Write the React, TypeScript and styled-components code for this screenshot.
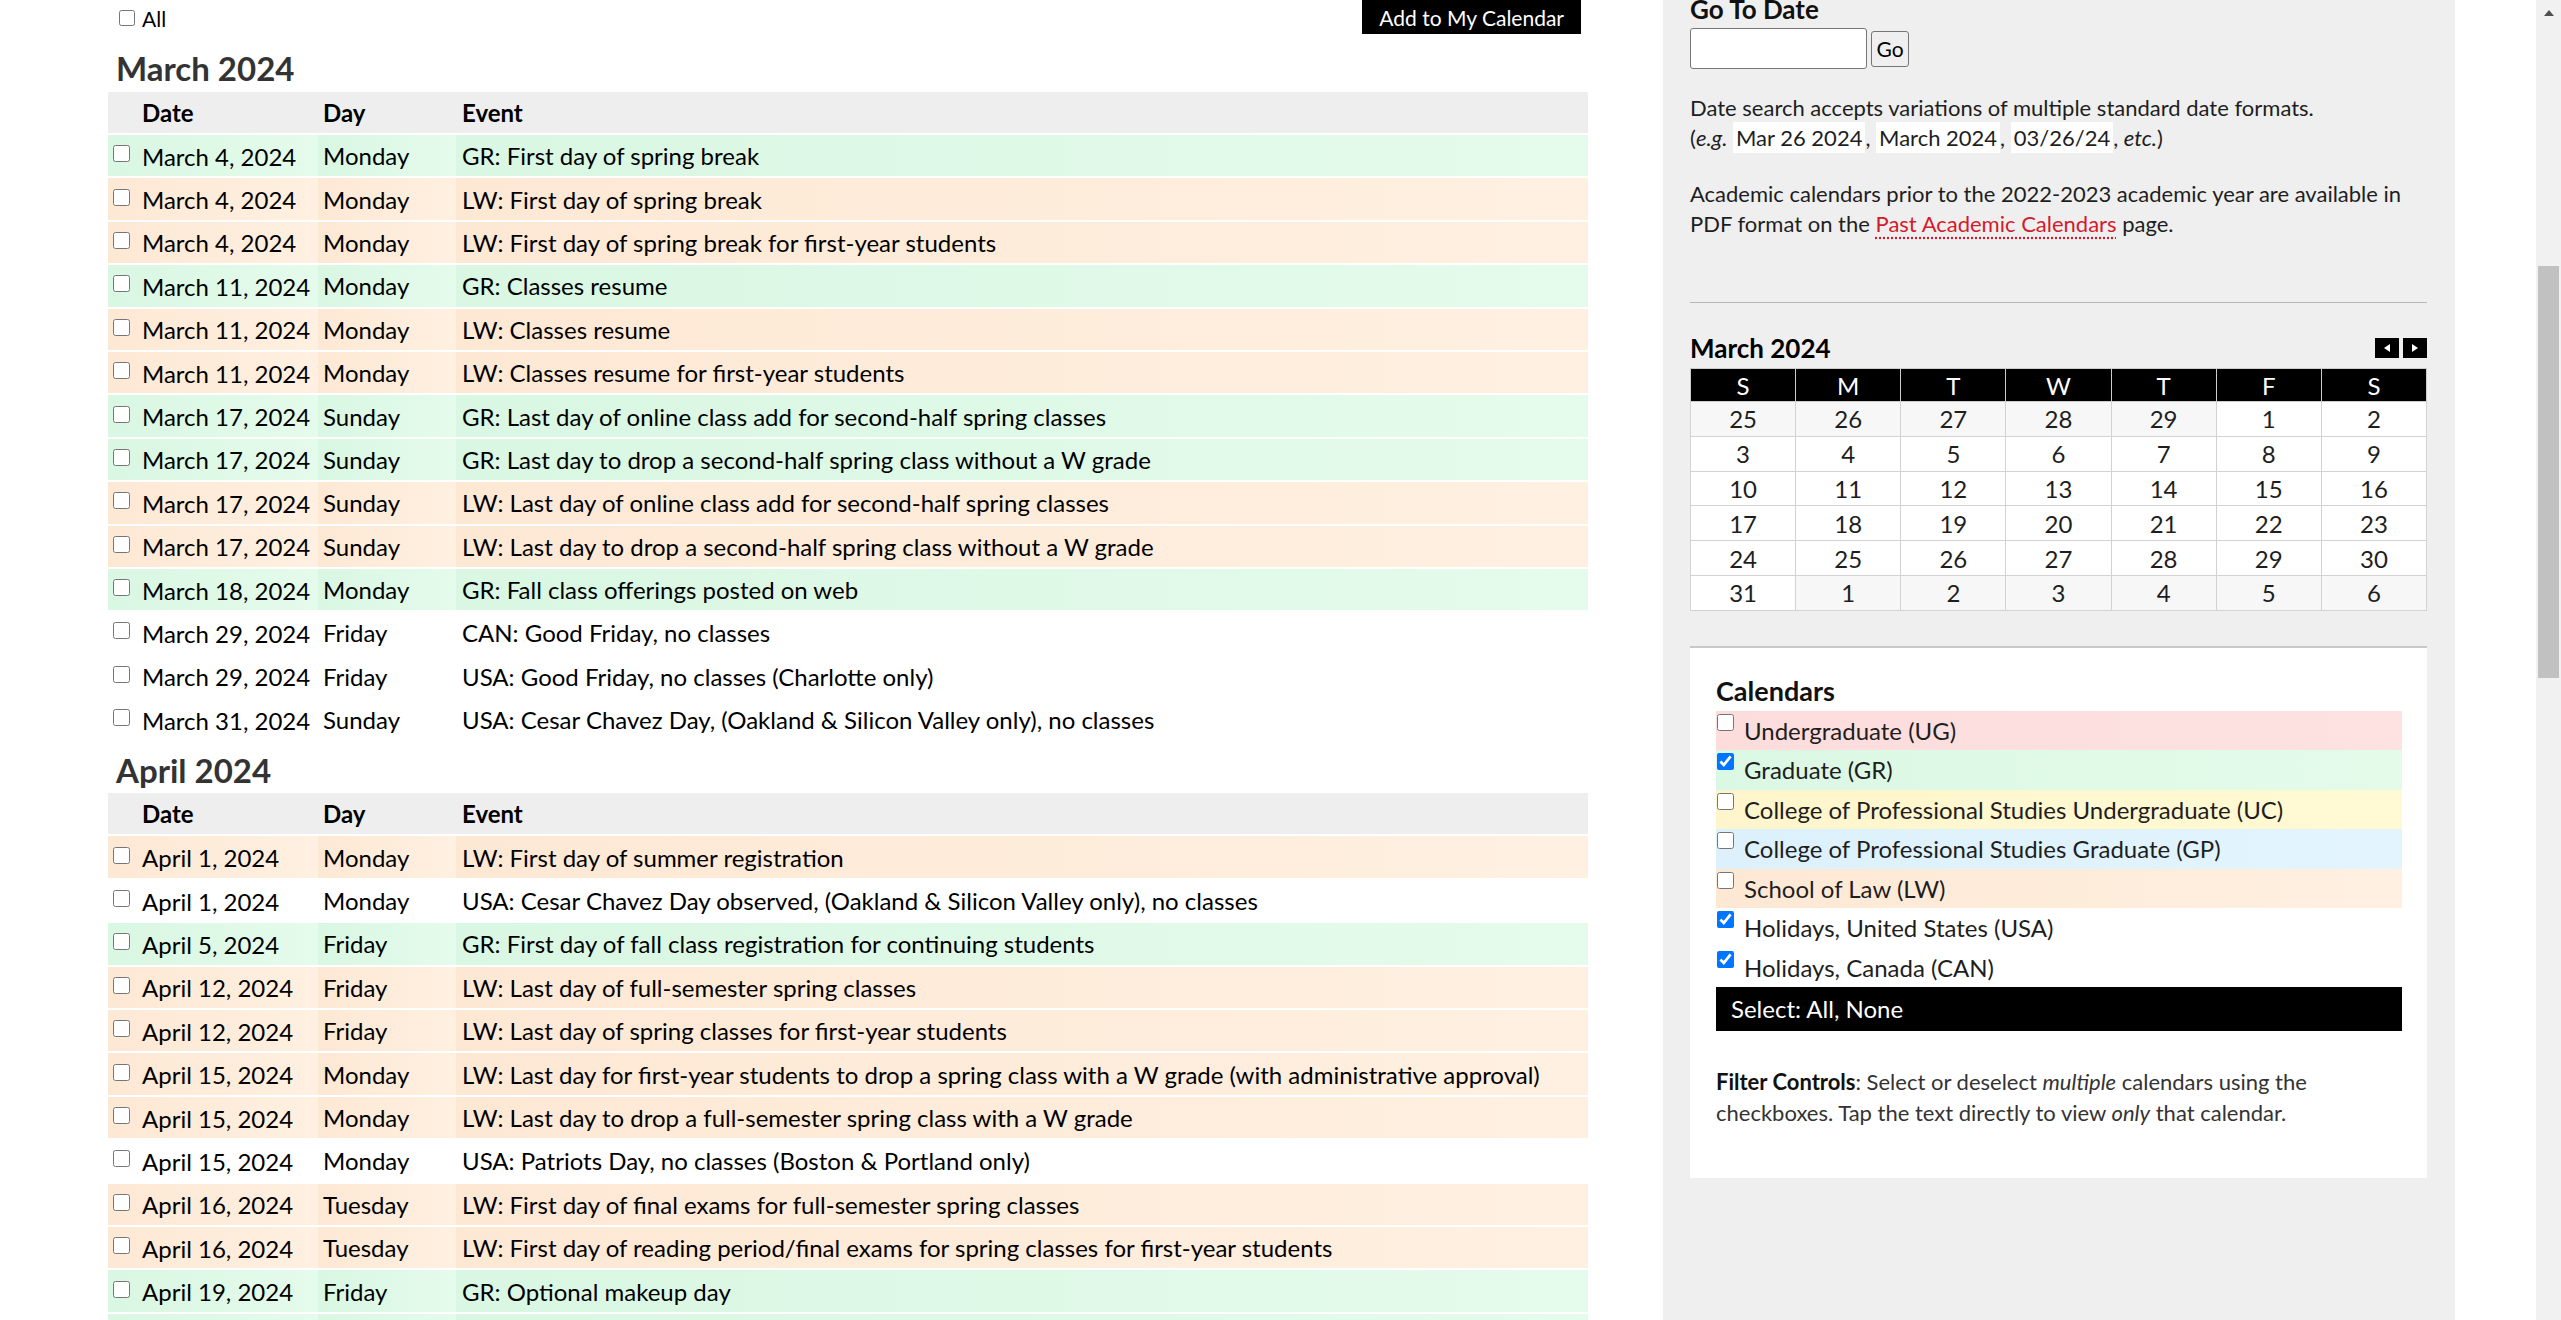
import React from 'react';
import styled, { createGlobalStyle } from 'styled-components';

const GlobalStyle = createGlobalStyle`
  html { scrollbar-width: none; }
  html, body { margin: 0; padding: 0; background: #fff; }
  body { font-family: Lato, "Open Sans", "Liberation Sans", sans-serif; color: #000; }
`;

type Cal = 'GR' | 'LW' | 'USA' | 'CAN';

const tones: Record<Cal, { from: string; to: string }> = {
  GR: { from: '#d9f7e3', to: '#e5fbeb' },
  LW: { from: '#fde8d4', to: '#fff0e1' },
  USA: { from: '#ffffff', to: '#ffffff' },
  CAN: { from: '#ffffff', to: '#ffffff' },
};

type Ev = { date: string; day: string; cal: Cal; text: string };

const march: Ev[] = [
  { date: 'March 4, 2024', day: 'Monday', cal: 'GR', text: 'GR: First day of spring break' },
  { date: 'March 4, 2024', day: 'Monday', cal: 'LW', text: 'LW: First day of spring break' },
  { date: 'March 4, 2024', day: 'Monday', cal: 'LW', text: 'LW: First day of spring break for first-year students' },
  { date: 'March 11, 2024', day: 'Monday', cal: 'GR', text: 'GR: Classes resume' },
  { date: 'March 11, 2024', day: 'Monday', cal: 'LW', text: 'LW: Classes resume' },
  { date: 'March 11, 2024', day: 'Monday', cal: 'LW', text: 'LW: Classes resume for first-year students' },
  { date: 'March 17, 2024', day: 'Sunday', cal: 'GR', text: 'GR: Last day of online class add for second-half spring classes' },
  { date: 'March 17, 2024', day: 'Sunday', cal: 'GR', text: 'GR: Last day to drop a second-half spring class without a W grade' },
  { date: 'March 17, 2024', day: 'Sunday', cal: 'LW', text: 'LW: Last day of online class add for second-half spring classes' },
  { date: 'March 17, 2024', day: 'Sunday', cal: 'LW', text: 'LW: Last day to drop a second-half spring class without a W grade' },
  { date: 'March 18, 2024', day: 'Monday', cal: 'GR', text: 'GR: Fall class offerings posted on web' },
  { date: 'March 29, 2024', day: 'Friday', cal: 'CAN', text: 'CAN: Good Friday, no classes' },
  { date: 'March 29, 2024', day: 'Friday', cal: 'USA', text: 'USA: Good Friday, no classes (Charlotte only)' },
  { date: 'March 31, 2024', day: 'Sunday', cal: 'USA', text: 'USA: Cesar Chavez Day, (Oakland & Silicon Valley only), no classes' },
];

const april: Ev[] = [
  { date: 'April 1, 2024', day: 'Monday', cal: 'LW', text: 'LW: First day of summer registration' },
  { date: 'April 1, 2024', day: 'Monday', cal: 'USA', text: 'USA: Cesar Chavez Day observed, (Oakland & Silicon Valley only), no classes' },
  { date: 'April 5, 2024', day: 'Friday', cal: 'GR', text: 'GR: First day of fall class registration for continuing students' },
  { date: 'April 12, 2024', day: 'Friday', cal: 'LW', text: 'LW: Last day of full-semester spring classes' },
  { date: 'April 12, 2024', day: 'Friday', cal: 'LW', text: 'LW: Last day of spring classes for first-year students' },
  { date: 'April 15, 2024', day: 'Monday', cal: 'LW', text: 'LW: Last day for first-year students to drop a spring class with a W grade (with administrative approval)' },
  { date: 'April 15, 2024', day: 'Monday', cal: 'LW', text: 'LW: Last day to drop a full-semester spring class with a W grade' },
  { date: 'April 15, 2024', day: 'Monday', cal: 'USA', text: 'USA: Patriots Day, no classes (Boston & Portland only)' },
  { date: 'April 16, 2024', day: 'Tuesday', cal: 'LW', text: 'LW: First day of final exams for full-semester spring classes' },
  { date: 'April 16, 2024', day: 'Tuesday', cal: 'LW', text: 'LW: First day of reading period/final exams for spring classes for first-year students' },
  { date: 'April 19, 2024', day: 'Friday', cal: 'GR', text: 'GR: Optional makeup day' },
  { date: 'April 19, 2024', day: 'Friday', cal: 'GR', text: 'GR: Last day of spring classes' },
  { date: 'April 20, 2024', day: 'Saturday', cal: 'GR', text: 'GR: Spring final exams begin' },
  { date: 'April 22, 2024', day: 'Monday', cal: 'LW', text: 'LW: Last day of final exams for spring classes' },
];

const Page = styled.div`
  display: flex;
  align-items: stretch;
  min-height: 100vh;
`;

const Main = styled.main`
  flex: none;
  width: 1480px;
  margin-left: 108px;
  padding-bottom: 60px;
`;

const TopBar = styled.div`
  display: flex;
  justify-content: space-between;
  align-items: center;
  height: 34px;
  padding-right: 7px;
`;

const AllLabel = styled.label`
  display: inline-flex;
  align-items: center;
  font-size: 21px;
  padding-left: 11px;
  padding-top: 2px;
`;

const Check = styled.input.attrs({ type: 'checkbox' })`
  width: 16px;
  height: 16px;
  margin: 0 7px 0 0;
  flex: none;
`;

const AddButton = styled.button`
  height: 34px;
  padding: 0 17px;
  background: #000;
  color: #fff;
  border: none;
  font-family: inherit;
  font-size: 21px;
`;

const MonthHeading = styled.h2<{ $top: number; $bottom: number }>`
  margin: ${(p) => p.$top}px 0 ${(p) => p.$bottom}px 8px;
  font-size: 33px;
  line-height: 38px;
  font-weight: 700;
  color: #333;
`;

const EventTable = styled.table`
  width: 100%;
  table-layout: fixed;
  border-collapse: separate;
  border-spacing: 0 2px;
  margin: -2px 0;
  font-size: 24px;
`;

const HeadCell = styled.th<{ $pad: number }>`
  background: #eee;
  text-align: left;
  font-weight: 700;
  height: 41px;
  padding: 0 0 0 ${(p) => p.$pad}px;
`;

const Cell = styled.td<{ $cal: Cal; $pad: number }>`
  height: 41.4px;
  padding: 0 0 0 ${(p) => p.$pad}px;
  white-space: nowrap;
  vertical-align: middle;
  background: linear-gradient(to right, ${(p) => tones[p.$cal].from}, ${(p) => tones[p.$cal].to});
`;

const DateWrap = styled.span`
  display: flex;
  align-items: center;
  padding-top: 1px;
`;

const RowCheck = styled.input.attrs({ type: 'checkbox' })`
  flex: none;
  width: 17px;
  height: 17px;
  margin: 0 12px 5px 0;
`;

const Sidebar = styled.aside`
  flex: none;
  width: 792px;
  margin-left: 75px;
  box-sizing: border-box;
  background: #efefef;
  padding: 0 28px 60px 27px;
  color: #1e1e1e;
`;

const SideHeading = styled.h3`
  margin: -6px 0 4px;
  font-size: 26px;
  line-height: 30px;
  font-weight: 700;
  color: #111;
`;

const GoForm = styled.div`
  display: flex;
  align-items: center;
  gap: 4px;
`;

const DateInput = styled.input`
  width: 177px;
  height: 41px;
  box-sizing: border-box;
  border: 1px solid #767676;
  border-radius: 3px;
  background: #fff;
`;

const GoButton = styled.button`
  width: 38px;
  height: 36px;
  padding: 0;
  border: 1px solid #767676;
  border-radius: 3px;
  background: #efefef;
  font-family: inherit;
  font-size: 21px;
  color: #000;
`;

const Para = styled.p<{ $mt: number }>`
  margin: ${(p) => p.$mt}px 0 0;
  font-size: 22px;
  line-height: 30px;
`;

const Sample = styled.span`
  background: #fff;
  padding: 2px 3px;
`;

const PastLink = styled.a`
  color: #d41b2c;
  text-decoration: underline dotted #d41b2c;
  text-underline-offset: 5px;
`;

const Rule = styled.hr`
  margin: 63px 0 0;
  border: none;
  border-top: 1px solid #b8b8b8;
`;

const CalHeader = styled.div`
  display: flex;
  justify-content: space-between;
  align-items: center;
  margin-top: 31px;
  height: 28px;
`;

const CalTitle = styled.div`
  font-size: 26px;
  font-weight: 700;
  color: #000;
`;

const NavGroup = styled.div`
  display: flex;
  gap: 4px;
`;

const NavBtn = styled.button`
  width: 24px;
  height: 20px;
  padding: 0;
  border: none;
  background: #000;
  display: flex;
  align-items: center;
  justify-content: center;
`;

const MiniCal = styled.table`
  width: 100%;
  margin-top: 6px;
  border-collapse: collapse;
  table-layout: fixed;
  font-size: 24px;
`;

const DowCell = styled.th`
  background: #000;
  color: #fff;
  font-weight: 400;
  height: 32px;
  padding: 0;
  border: 1px solid #ccc;
`;

const DayCell = styled.td<{ $other: boolean }>`
  height: 33.8px;
  padding: 0;
  text-align: center;
  border: 1px solid #d2d2d2;
  background: ${(p) => (p.$other ? '#f7f7f7' : '#fff')};
`;

const FilterBox = styled.section`
  margin-top: 35px;
  background: #fff;
  border-top: 2px solid #c8c8c8;
  padding: 28px 25px 50px 26px;
`;

const FilterTitle = styled.h3`
  margin: 0 0 5px;
  font-size: 27px;
  line-height: 30px;
  font-weight: 700;
  color: #111;
`;

const CalItem = styled.label<{ $bg: string }>`
  display: block;
  height: 39.5px;
  line-height: 39.5px;
  font-size: 24px;
  background: ${(p) => p.$bg};
  white-space: nowrap;
`;

const ItemCheck = styled.input.attrs({ type: 'checkbox' })`
  width: 17px;
  height: 17px;
  margin: 3px 10px 0 1px;
  vertical-align: top;
`;

const SelectBar = styled.div`
  height: 44px;
  line-height: 44px;
  background: #000;
  color: #fff;
  font-size: 24px;
  padding-left: 15px;
`;

const FilterNote = styled.p`
  margin: 35px 0 0;
  font-size: 22px;
  line-height: 31px;
  color: #333;
  b { color: #111; }
`;

const ScrollTrack = styled.div`
  position: fixed;
  top: 0;
  right: 0;
  width: 25px;
  height: 100vh;
  background: #f1f1f1;
  display: flex;
  flex-direction: column;
  align-items: center;
`;

const ScrollArrow = styled.div`
  height: 25px;
  display: flex;
  align-items: center;
  justify-content: center;
`;

const ScrollThumb = styled.div`
  margin-top: 241px;
  width: 21px;
  height: 412px;
  background: #c1c1c1;
`;

const weeks: number[][] = [
  [25, 26, 27, 28, 29, 1, 2],
  [3, 4, 5, 6, 7, 8, 9],
  [10, 11, 12, 13, 14, 15, 16],
  [17, 18, 19, 20, 21, 22, 23],
  [24, 25, 26, 27, 28, 29, 30],
  [31, 1, 2, 3, 4, 5, 6],
];

const calendars = [
  { label: 'Undergraduate (UG)', bg: 'linear-gradient(to right, #fddcdc, #fde2e2)', on: false },
  { label: 'Graduate (GR)', bg: 'linear-gradient(to right, #dbf8e4, #e4fbea)', on: true },
  { label: 'College of Professional Studies Undergraduate (UC)', bg: 'linear-gradient(to right, #fff5cc, #fffad4)', on: false },
  { label: 'College of Professional Studies Graduate (GP)', bg: 'linear-gradient(to right, #dcf1fc, #e3f4fd)', on: false },
  { label: 'School of Law (LW)', bg: 'linear-gradient(to right, #fde8d4, #fff0e1)', on: false },
  { label: 'Holidays, United States (USA)', bg: '#fff', on: true },
  { label: 'Holidays, Canada (CAN)', bg: '#fff', on: true },
];

function MonthTable({ title, rows, top, bottom }: { title: string; rows: Ev[]; top: number; bottom: number }) {
  return (
    <>
      <MonthHeading $top={top} $bottom={bottom}>{title}</MonthHeading>
      <EventTable>
        <colgroup>
          <col style={{ width: 210 }} />
          <col style={{ width: 138 }} />
          <col />
        </colgroup>
        <thead>
          <tr>
            <HeadCell $pad={34}>Date</HeadCell>
            <HeadCell $pad={5}>Day</HeadCell>
            <HeadCell $pad={6}>Event</HeadCell>
          </tr>
        </thead>
        <tbody>
          {rows.map((r, i) => (
            <tr key={i}>
              <Cell $cal={r.cal} $pad={5}>
                <DateWrap>
                  <RowCheck />
                  {r.date}
                </DateWrap>
              </Cell>
              <Cell $cal={r.cal} $pad={5}>{r.day}</Cell>
              <Cell $cal={r.cal} $pad={6}>{r.text}</Cell>
            </tr>
          ))}
        </tbody>
      </EventTable>
    </>
  );
}

const Arrow = ({ dir }: { dir: 'left' | 'right' }) => (
  <svg width="6" height="8" viewBox="0 0 6 8">
    <polygon points={dir === 'left' ? '6,0 6,8 0,4' : '0,0 0,8 6,4'} fill="#fff" />
  </svg>
);

export default function App() {
  return (
    <>
      <GlobalStyle />
      <Page>
        <Main>
          <TopBar>
            <AllLabel>
              <Check />
              All
            </AllLabel>
            <AddButton>Add to My Calendar</AddButton>
          </TopBar>
          <MonthTable title="March 2024" rows={march} top={15} bottom={5} />
          <MonthTable title="April 2024" rows={april} top={11} bottom={4} />
        </Main>
        <Sidebar>
          <SideHeading>Go To Date</SideHeading>
          <GoForm>
            <DateInput type="text" />
            <GoButton>Go</GoButton>
          </GoForm>
          <Para $mt={24}>
            Date search accepts variations of multiple standard date formats.
            <br />
            (<i>e.g.</i> <Sample>Mar 26 2024</Sample>, <Sample>March 2024</Sample>, <Sample>03/26/24</Sample>, <i>etc.</i>)
          </Para>
          <Para $mt={26}>
            Academic calendars prior to the 2022-2023 academic year are available in PDF format on the{' '}
            <PastLink href="#">Past Academic Calendars</PastLink> page.
          </Para>
          <Rule />
          <CalHeader>
            <CalTitle>March 2024</CalTitle>
            <NavGroup>
              <NavBtn aria-label="Previous month"><Arrow dir="left" /></NavBtn>
              <NavBtn aria-label="Next month"><Arrow dir="right" /></NavBtn>
            </NavGroup>
          </CalHeader>
          <MiniCal>
            <thead>
              <tr>
                {['S', 'M', 'T', 'W', 'T', 'F', 'S'].map((d, i) => (
                  <DowCell key={i}>{d}</DowCell>
                ))}
              </tr>
            </thead>
            <tbody>
              {weeks.map((w, wi) => (
                <tr key={wi}>
                  {w.map((d, di) => {
                    const other = (wi === 0 && d > 20) || (wi === 5 && d < 20);
                    return (
                      <DayCell key={di} $other={other}>
                        {d}
                      </DayCell>
                    );
                  })}
                </tr>
              ))}
            </tbody>
          </MiniCal>
          <FilterBox>
            <FilterTitle>Calendars</FilterTitle>
            {calendars.map((c) => (
              <CalItem key={c.label} $bg={c.bg}>
                <ItemCheck defaultChecked={c.on} />
                {c.label}
              </CalItem>
            ))}
            <SelectBar>Select: All, None</SelectBar>
            <FilterNote>
              <b>Filter Controls</b>: Select or deselect <i>multiple</i> calendars using the checkboxes. Tap the text
              directly to view <i>only</i> that calendar.
            </FilterNote>
          </FilterBox>
        </Sidebar>
      </Page>
      <ScrollTrack aria-hidden="true">
        <ScrollArrow>
          <svg width="10" height="6" viewBox="0 0 10 6">
            <polygon points="0,6 10,6 5,0" fill="#505050" />
          </svg>
        </ScrollArrow>
        <ScrollThumb />
      </ScrollTrack>
    </>
  );
}
